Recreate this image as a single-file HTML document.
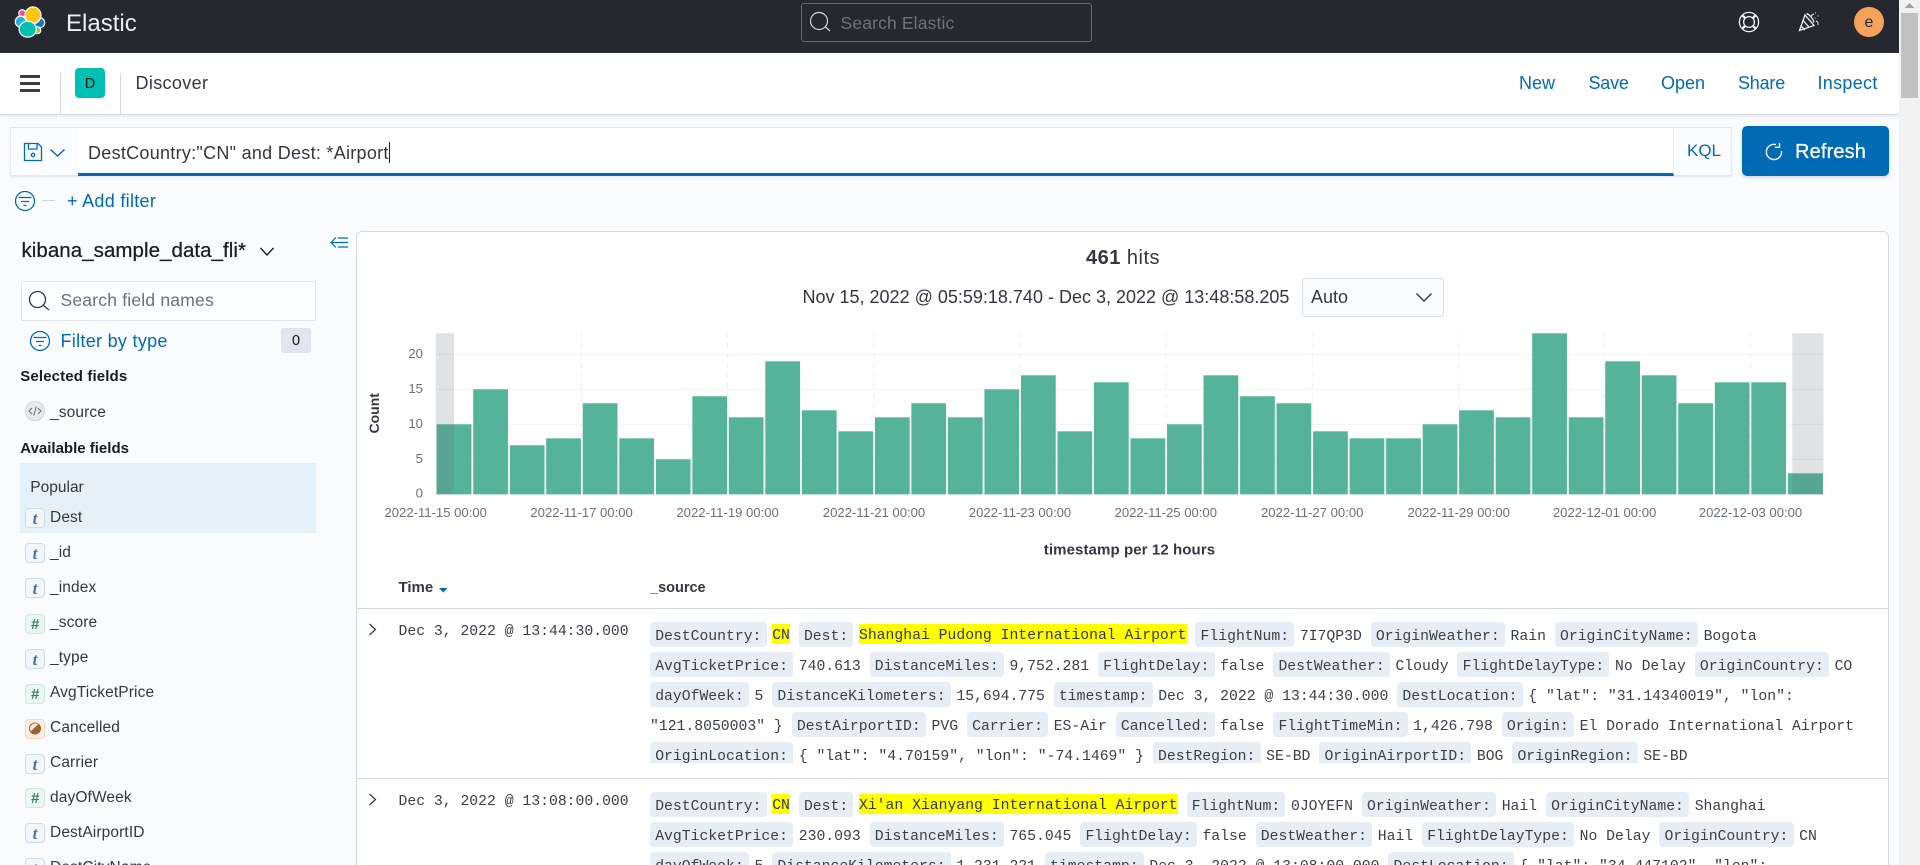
<!DOCTYPE html>
<html><head><meta charset="utf-8"><title>Discover - Elastic</title>
<style>
html,body{margin:0;padding:0;width:1920px;height:865px;overflow:hidden;background:#fafbfd}
body{position:relative;font-family:"Liberation Sans",sans-serif;color:#343741}
.a{position:absolute;white-space:pre}
.box{position:absolute;box-sizing:border-box}
.blue{color:#006bb4}
svg{position:absolute;overflow:visible}
.f{position:absolute;left:50px;font-size:15.5px;letter-spacing:.12px;line-height:20px;height:20px;color:#343741;white-space:pre}
.tk{position:absolute;left:25px;width:20px;height:20px;box-sizing:border-box;border-radius:4px;text-align:center;font:italic bold 17px/19px "Liberation Serif",serif}
.t{background:#f1f6fb;border:1px solid #cddcec;color:#4e7397}
.n{background:#e9f6f2;border:1px solid #cfe9e0;color:#3e7d68;font-family:"Liberation Sans",sans-serif;font-size:15px}
.o{background:#fbeee3;border:1px solid #f6d9c2}
.src{position:absolute;left:650px;width:1235px;overflow:hidden}
.l{position:absolute;left:0;height:25px;white-space:pre;font:14.75px/30px "Liberation Mono",monospace;color:#3a3e49}
.l b{font-weight:400;display:inline-block;vertical-align:top;height:25px;line-height:30px;padding:0 5.2px;margin-right:5.6px;background:#e6edf4;border-radius:4px}
.l mark{display:inline-block;vertical-align:top;margin-top:2px;height:20px;line-height:25px;background:#ff0;color:#343741}
.d{font:14.75px/20px "Liberation Mono",monospace;color:#3a3e49;left:398.5px}
</style></head>
<body>

<!-- top bar -->
<div class="box" style="left:0;top:0;width:1899px;height:53px;background:#25282f"></div>
<svg style="left:0;top:0" width="60" height="53">
<g stroke="#fff" stroke-width="1.2">
<circle cx="22.3" cy="13.3" r="3.6" fill="#ee4f9a"/>
<ellipse cx="20.7" cy="21.7" rx="5.4" ry="5.6" fill="#22aee8"/>
<ellipse cx="39.3" cy="22.7" rx="5.4" ry="5.2" fill="#0a77cf"/>
<circle cx="37.3" cy="30.2" r="3.5" fill="#93c83e"/>
<ellipse cx="33" cy="15.3" rx="8" ry="8.3" fill="#fec514"/>
<ellipse cx="27.7" cy="29.2" rx="8.6" ry="8" fill="#00bfb3"/>
</g>
</svg>
<div class="a" style="left:66px;top:9px;font-size:24px;line-height:30px;color:#eceef1">Elastic</div>
<div class="box" style="left:800.5px;top:2.5px;width:291px;height:39px;border:1px solid #63676e;border-radius:3px"></div>
<svg style="left:0;top:0" width="1px" height="1px">
<circle cx="819" cy="21" r="8.5" fill="none" stroke="#d4d6d9" stroke-width="1.2"/>
<path d="M825.5 27L830 31" stroke="#d4d6d9" stroke-width="1.2" fill="none"/>
</svg>
<div class="a" style="left:840.5px;top:13px;font-size:17.5px;line-height:20px;letter-spacing:.15px;color:#6f7279">Search Elastic</div>
<svg style="left:0;top:0" width="1" height="1" fill="none" stroke="#f0f1f3" stroke-width="1.3">
<circle cx="1749" cy="22" r="9.6"/><circle cx="1749" cy="22" r="5.4"/>
<path d="M1742.2 15.2L1745.2 18.2M1755.8 15.2L1752.8 18.2M1742.2 28.8L1745.2 25.8M1755.8 28.8L1752.8 25.8" stroke-width="2.4"/>
<path d="M1805 15L1799.5 30.5L1814 25.5Z"/>
<path d="M1803 20.5L1809 27.2M1801 26L1805 30"/>
<path d="M1806.5 13.5C1809.5 14.5 1813 18.5 1814 22.5"/>
<path d="M1811 17.5C1811 15.5 1812 14.5 1814 14M1816 21C1817.5 21.5 1818.5 23 1818 25M1815 13h1M1817.5 16h1M1814.5 18h1" stroke-width="1"/>
</svg>
<div class="box" style="left:1854px;top:7px;width:30px;height:30px;border-radius:50%;background:#f5a35c;text-align:center;font-size:16px;line-height:31px;color:#25282f">e</div>

<!-- second bar -->
<div class="box" style="left:0;top:53px;width:1899px;height:62px;background:#fff;border-bottom:1px solid #d3dae6;box-shadow:0 1px 3px rgba(152,162,179,.25)"></div>
<div class="box" style="left:20px;top:75px;width:20px;height:2.5px;background:#3b3e47"></div>
<div class="box" style="left:20px;top:82px;width:20px;height:2.5px;background:#3b3e47"></div>
<div class="box" style="left:20px;top:89px;width:20px;height:2.5px;background:#3b3e47"></div>
<div class="box" style="left:59.5px;top:73px;width:1px;height:41px;background:#d3dae6"></div>
<div class="box" style="left:119.5px;top:73px;width:1px;height:41px;background:#d3dae6"></div>
<div class="box" style="left:75px;top:68px;width:30px;height:30px;border-radius:4px;background:#00bfb3;text-align:center;font-size:14.5px;line-height:32px;color:#111">D</div>
<div class="a" style="left:135.5px;top:73px;font-size:18px;line-height:20px;letter-spacing:.35px;color:#343741">Discover</div>
<div class="a blue" style="left:1519px;top:73px;font-size:18px;line-height:20px">New</div>
<div class="a blue" style="left:1588.5px;top:73px;font-size:18px;line-height:20px;letter-spacing:-.2px">Save</div>
<div class="a blue" style="left:1661px;top:73px;font-size:18px;line-height:20px">Open</div>
<div class="a blue" style="left:1738px;top:73px;font-size:18px;line-height:20px;letter-spacing:-.2px">Share</div>
<div class="a blue" style="left:1817.5px;top:73px;font-size:18px;line-height:20px;letter-spacing:.3px">Inspect</div>

<!-- query bar -->
<div class="box" style="left:10px;top:126.5px;width:1722px;height:49px;background:#fbfcfd;border:1px solid #e4e8f0;box-shadow:0 1px 2px rgba(152,162,179,.2)"></div>
<div class="box" style="left:78px;top:127.5px;width:1595.5px;height:48px;background:#fff;border-bottom:3px solid #006bb4;border-right:1px solid #e4e8f0"></div>
<svg style="left:0;top:0" width="1" height="1" fill="none" stroke="#006bb4" stroke-width="1.3">
<path d="M24.5 143.5H38L41.5 147V160.5H24.5Z"/>
<path d="M28.5 143.5V149H37V143.5"/>
<circle cx="33" cy="155" r="1.7"/>
<path d="M50.5 149.5L57.5 156L64.5 149.5" stroke-width="1.5"/>
</svg>
<div class="a" style="left:88px;top:143px;font-size:18px;line-height:21px;letter-spacing:.28px;color:#343741">DestCountry:"CN" and Dest: *Airport</div>
<div class="box" style="left:388.5px;top:142px;width:1px;height:21px;background:#222"></div>
<div class="a blue" style="left:1687px;top:140.5px;font-size:17px;line-height:20px">KQL</div>
<div class="box" style="left:1742px;top:126px;width:147px;height:49.5px;background:#006bb4;border-radius:5px;box-shadow:0 2px 3px rgba(152,162,179,.4)"></div>
<svg style="left:0;top:0" width="1" height="1" fill="none" stroke="#fff" stroke-width="1.4">
<path d="M1776 144.6A7.6 7.6 0 1 0 1781.5 151"/>
<path d="M1779.5 143V147.3H1775"/>
</svg>
<div class="a" style="left:1795px;top:140.5px;font-size:20px;line-height:22px;letter-spacing:.15px;color:#fff;-webkit-text-stroke:.3px #fff">Refresh</div>

<!-- filter row -->
<svg style="left:0;top:0" width="1" height="1" fill="none" stroke="#006bb4" stroke-width="1.3">
<circle cx="25" cy="201" r="9.5"/>
<path d="M18.5 197.5H31.5M21 201.5H29M23.5 205.5H26.5"/>
<circle cx="40" cy="341" r="9.5"/>
<path d="M33.5 337.5H46.5M36 341.5H44M38.5 345.5H41.5"/>
<path d="M331 242.5H348M336 237.5L331 242.5L336 247.5M338 238H348M338 247H348" stroke-width="1.2"/>
</svg>
<div class="box" style="left:42px;top:200px;width:13px;height:1px;background:#cfd5df"></div>
<div class="a blue" style="left:67px;top:190.5px;font-size:18px;line-height:20px;letter-spacing:.3px">+ Add filter</div>

<!-- sidebar -->
<div class="a" style="left:21.5px;top:238px;font-size:20.5px;line-height:25px;letter-spacing:.05px;color:#1a1c21;-webkit-text-stroke:.25px #1a1c21">kibana_sample_data_fli*</div>
<svg style="left:0;top:0" width="1" height="1" fill="none" stroke="#1a1c21" stroke-width="1.4">
<path d="M260.5 248L267 255L273.5 248"/>
</svg>
<div class="box" style="left:20.5px;top:281px;width:295px;height:39.5px;background:#fcfdfe;border:1px solid #dfe3ea;border-radius:2px"></div>
<svg style="left:0;top:0" width="1" height="1" fill="none" stroke="#343741" stroke-width="1.3">
<circle cx="37.5" cy="299.5" r="8"/><path d="M43.5 305.5L49 310"/>
</svg>
<div class="a" style="left:60.5px;top:290px;font-size:17.5px;line-height:20px;letter-spacing:.2px;color:#69707d">Search field names</div>
<div class="a blue" style="left:60.5px;top:330.5px;font-size:18px;line-height:20px;letter-spacing:.3px">Filter by type</div>
<div class="box" style="left:281px;top:328px;width:30px;height:24.5px;background:#e0e5ee;border-radius:3px;text-align:center;font-size:14.5px;line-height:26px;color:#111">0</div>
<div class="a" style="left:20.3px;top:367px;font-size:15px;line-height:20px;font-weight:700;letter-spacing:.13px;color:#1a1c21">Selected fields</div>
<div class="box" style="left:25px;top:401px;width:20px;height:20px;border-radius:50%;background:#e9eaec;border:1px solid #cfd2d6"></div>
<svg style="left:0;top:0" width="1" height="1" fill="none" stroke="#69707d" stroke-width="1">
<path d="M32 408L29 411L32 414M38 408L41 411L38 414M36.3 406.5L33.7 415.5"/>
</svg>
<div class="f" style="top:402.5px">_source</div>
<div class="a" style="left:20.3px;top:439px;font-size:15px;line-height:20px;font-weight:700;color:#1a1c21">Available fields</div>
<div class="box" style="left:20px;top:463px;width:296px;height:70px;background:#e6f0f8"></div>
<div class="a" style="left:30.3px;top:477.5px;font-size:15.5px;line-height:20px;color:#343741">Popular</div>

<div class="tk t" style="top:508px">t</div><div class="f" style="top:507.5px">Dest</div>
<div class="tk t" style="top:543px">t</div><div class="f" style="top:542.5px">_id</div>
<div class="tk t" style="top:578px">t</div><div class="f" style="top:577.5px">_index</div>
<div class="tk n" style="top:613.5px">#</div><div class="f" style="top:613px">_score</div>
<div class="tk t" style="top:648.5px">t</div><div class="f" style="top:648px">_type</div>
<div class="tk n" style="top:683.5px">#</div><div class="f" style="top:683px">AvgTicketPrice</div>
<div class="tk o" style="top:718.5px"></div><div class="f" style="top:718px">Cancelled</div>
<svg style="left:0;top:0" width="1" height="1">
<circle cx="35" cy="728.5" r="6" fill="#a1612f"/>
<path d="M34.2 723.6A5 5 0 0 0 30.9 731.3L38.2 724.2A5 5 0 0 0 34.2 723.6Z" fill="#fbeee3"/>
</svg>
<div class="tk t" style="top:753.5px">t</div><div class="f" style="top:753px">Carrier</div>
<div class="tk n" style="top:788px">#</div><div class="f" style="top:788px">dayOfWeek</div>
<div class="tk t" style="top:823px">t</div><div class="f" style="top:823px">DestAirportID</div>
<div class="tk t" style="top:858px">t</div><div class="f" style="top:858px">DestCityName</div>

<!-- main panel -->
<div class="box" style="left:356px;top:231px;width:1533px;height:660px;background:#fff;border:1px solid #d3dae6;border-radius:6px"></div>
<div class="a" style="left:1086px;top:246px;font-size:20px;line-height:24px;letter-spacing:.5px;color:#343741"><b>461</b> hits</div>
<div class="a" style="left:802.5px;top:287px;font-size:18px;line-height:21px;color:#343741">Nov 15, 2022 @ 05:59:18.740 - Dec 3, 2022 @ 13:48:58.205</div>
<div class="box" style="left:1301.5px;top:277.5px;width:142px;height:39.5px;background:#fbfcfd;border:1px solid #d9dfe8;border-radius:3px"></div>
<div class="a" style="left:1311px;top:287px;font-size:18px;line-height:21px;color:#343741">Auto</div>
<svg style="left:0;top:0" width="1" height="1" fill="none" stroke="#343741" stroke-width="1.4">
<path d="M1416.5 293.5L1424 301L1431.5 293.5"/>
</svg>

<!-- chart -->
<svg style="left:0;top:0" width="1920" height="865" font-family="Liberation Sans, sans-serif">
<g stroke="#f0f2f5" stroke-width="1.2">
<path d="M435.7 354.3H1823.5M435.7 389.3H1823.5M435.7 424.3H1823.5M435.7 459.3H1823.5M435.7 494.3H1823.5"/>
</g>
<g stroke="#eceff3" stroke-width="1" stroke-dasharray="5 5">
<path d="M581.6 333V494M727.6 333V494M874 333V494M1020 333V494M1165.8 333V494M1312.2 333V494M1458.7 333V494M1604.6 333V494M1750.5 333V494"/>
</g>
<g fill="#54b399" transform="translate(-0.44,494.3) scale(1.001,-7)">
<rect x="436.7" width="34.7" height="10"/>
<rect x="473.2" width="34.7" height="15"/>
<rect x="509.7" width="34.7" height="7"/>
<rect x="546.1" width="34.7" height="8"/>
<rect x="582.6" width="34.7" height="13"/>
<rect x="619.1" width="34.7" height="8"/>
<rect x="655.6" width="34.7" height="5"/>
<rect x="692.1" width="34.7" height="14"/>
<rect x="728.5" width="34.7" height="11"/>
<rect x="765" width="34.7" height="19"/>
<rect x="801.5" width="34.7" height="12"/>
<rect x="838" width="34.7" height="9"/>
<rect x="874.5" width="34.7" height="11"/>
<rect x="910.9" width="34.7" height="13"/>
<rect x="947.4" width="34.7" height="11"/>
<rect x="983.9" width="34.7" height="15"/>
<rect x="1020.4" width="34.7" height="17"/>
<rect x="1056.9" width="34.7" height="9"/>
<rect x="1093.3" width="34.7" height="16"/>
<rect x="1129.8" width="34.7" height="8"/>
<rect x="1166.3" width="34.7" height="10"/>
<rect x="1202.8" width="34.7" height="17"/>
<rect x="1239.3" width="34.7" height="14"/>
<rect x="1275.7" width="34.7" height="13"/>
<rect x="1312.2" width="34.7" height="9"/>
<rect x="1348.7" width="34.7" height="8"/>
<rect x="1385.2" width="34.7" height="8"/>
<rect x="1421.7" width="34.7" height="10"/>
<rect x="1458.1" width="34.7" height="12"/>
<rect x="1494.6" width="34.7" height="11"/>
<rect x="1531.1" width="34.7" height="23"/>
<rect x="1567.6" width="34.7" height="11"/>
<rect x="1604.1" width="34.7" height="19"/>
<rect x="1640.5" width="34.7" height="17"/>
<rect x="1677" width="34.7" height="13"/>
<rect x="1713.5" width="34.7" height="16"/>
<rect x="1750" width="34.7" height="16"/>
<rect x="1786.5" width="35" height="3"/>
</g>
<rect x="435.7" y="333.3" width="18.3" height="161" fill="#69707d" opacity=".2"/>
<rect x="1792.3" y="333.3" width="31.2" height="161" fill="#69707d" opacity=".2"/>
<g font-size="13.2" fill="#69707d" text-anchor="end">
<text x="423" y="358">20</text><text x="423" y="393">15</text><text x="423" y="428">10</text><text x="423" y="463">5</text><text x="423" y="497.5">0</text>
</g>
<text transform="translate(379,413.3) rotate(-90)" text-anchor="middle" font-size="14" font-weight="700" fill="#343741">Count</text>
<g font-size="13.1" fill="#69707d" text-anchor="middle">
<text x="435.7" y="517">2022-11-15 00:00</text>
<text x="581.6" y="517">2022-11-17 00:00</text>
<text x="727.6" y="517">2022-11-19 00:00</text>
<text x="874" y="517">2022-11-21 00:00</text>
<text x="1020" y="517">2022-11-23 00:00</text>
<text x="1165.8" y="517">2022-11-25 00:00</text>
<text x="1312.2" y="517">2022-11-27 00:00</text>
<text x="1458.7" y="517">2022-11-29 00:00</text>
<text x="1604.6" y="517">2022-12-01 00:00</text>
<text x="1750.5" y="517">2022-12-03 00:00</text>
</g>
<text x="1129.5" y="554.5" text-anchor="middle" font-size="15" font-weight="700" letter-spacing=".1" fill="#343741">timestamp per 12 hours</text>
<path d="M439 588H447.5L443.2 592.5Z" fill="#006bb4"/>
<path d="M369.5 624L375.5 629.5L369.5 635M369.5 794L375.5 799.5L369.5 805" fill="none" stroke="#343741" stroke-width="1.2"/>
</svg>

<!-- table -->
<div class="a" style="left:398.5px;top:578px;font-size:15px;line-height:20px;font-weight:700;color:#343741">Time</div>
<div class="a" style="left:650px;top:577.5px;font-size:14.5px;line-height:20px;font-weight:700;color:#343741">_source</div>
<div class="box" style="left:357px;top:608px;width:1531px;height:1px;background:#d3dae6"></div>
<div class="box" style="left:357px;top:778px;width:1531px;height:1px;background:#d3dae6"></div>
<div class="a d" style="top:621.5px">Dec 3, 2022 @ 13:44:30.000</div>
<div class="a d" style="top:791.5px">Dec 3, 2022 @ 13:08:00.000</div>

<div class="src" style="top:615px;height:148px">
<div class="l" style="top:7px"><b>DestCountry:</b><mark>CN</mark> <b>Dest:</b><mark>Shanghai Pudong International Airport</mark> <b>FlightNum:</b>7I7QP3D <b>OriginWeather:</b>Rain <b>OriginCityName:</b>Bogota</div>
<div class="l" style="top:37px"><b>AvgTicketPrice:</b>740.613 <b>DistanceMiles:</b>9,752.281 <b>FlightDelay:</b>false <b>DestWeather:</b>Cloudy <b>FlightDelayType:</b>No Delay <b>OriginCountry:</b>CO</div>
<div class="l" style="top:67px"><b>dayOfWeek:</b>5 <b>DistanceKilometers:</b>15,694.775 <b>timestamp:</b>Dec 3, 2022 @ 13:44:30.000 <b>DestLocation:</b>{ "lat": "31.14340019", "lon":</div>
<div class="l" style="top:97px">"121.8050003" } <b>DestAirportID:</b>PVG <b>Carrier:</b>ES-Air <b>Cancelled:</b>false <b>FlightTimeMin:</b>1,426.798 <b>Origin:</b>El Dorado International Airport</div>
<div class="l" style="top:127px"><b>OriginLocation:</b>{ "lat": "4.70159", "lon": "-74.1469" } <b>DestRegion:</b>SE-BD <b>OriginAirportID:</b>BOG <b>OriginRegion:</b>SE-BD</div>
</div>

<div class="src" style="top:785px;height:80px">
<div class="l" style="top:7px"><b>DestCountry:</b><mark>CN</mark> <b>Dest:</b><mark>Xi'an Xianyang International Airport</mark> <b>FlightNum:</b>0JOYEFN <b>OriginWeather:</b>Hail <b>OriginCityName:</b>Shanghai</div>
<div class="l" style="top:37px"><b>AvgTicketPrice:</b>230.093 <b>DistanceMiles:</b>765.045 <b>FlightDelay:</b>false <b>DestWeather:</b>Hail <b>FlightDelayType:</b>No Delay <b>OriginCountry:</b>CN</div>
<div class="l" style="top:67px"><b>dayOfWeek:</b>5 <b>DistanceKilometers:</b>1,231.221 <b>timestamp:</b>Dec 3, 2022 @ 13:08:00.000 <b>DestLocation:</b>{ "lat": "34.447102", "lon":</div>
</div>

<!-- scrollbar -->
<div class="box" style="left:1899px;top:0;width:21px;height:865px;background:#f1f1f1"></div>
<div class="box" style="left:1901px;top:13px;width:17px;height:85px;background:#c1c1c1"></div>
<svg style="left:0;top:0" width="1" height="1"><path d="M1904.5 8L1909.5 3L1914.5 8Z" fill="#a3a3a3"/></svg>

</body></html>
